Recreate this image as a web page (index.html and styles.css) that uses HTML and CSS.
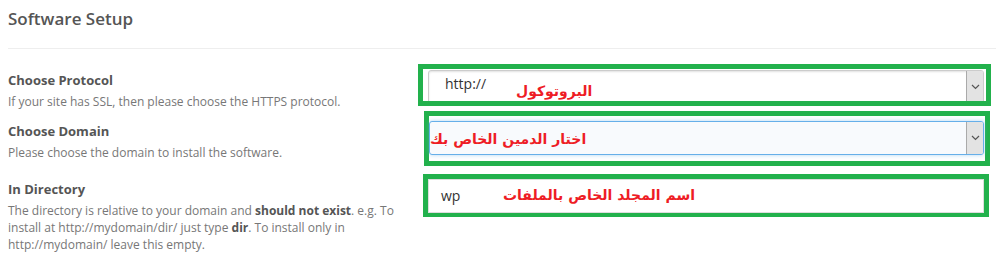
FILE: index.html
```html
<!DOCTYPE html>
<html>
<head>
	<title>Software Setup</title>
	<link rel="stylesheet" href="styles.css">
</head>

<body>
	<div class="panel">
		<h2 class="panel-title">Software Setup</h2>

		<div class="fields">
			<div class="label-block label-protocol">
				<div class="label">Choose Protocol</div>
				<div class="help">If your site has SSL, then please choose the HTTPS protocol.</div>
			</div>
			<div class="mark mark-protocol">
				<div class="select">
					<span class="select-value">http://</span>
					<span class="select-arrow"><svg width="9" height="6" viewBox="0 0 9 6"><path d="M1 1l3.5 3.5L8 1" fill="none" stroke="#555" stroke-width="1.2"/></svg></span>
				</div>
				<span class="note note-protocol">البروتوكول</span>
			</div>

			<div class="label-block label-domain">
				<div class="label">Choose Domain</div>
				<div class="help">Please choose the domain to install the software.</div>
			</div>
			<div class="mark mark-domain">
				<div class="select select-focus">
					<span class="select-value"></span>
					<span class="select-arrow"><svg width="9" height="6" viewBox="0 0 9 6"><path d="M1 1l3.5 3.5L8 1" fill="none" stroke="#555" stroke-width="1.2"/></svg></span>
				</div>
				<span class="note note-domain">اختار الدمين الخاص بك</span>
			</div>

			<div class="label-block label-dir">
				<div class="label">In Directory</div>
				<div class="help">The directory is relative to your domain and <b>should not exist</b>. e.g. To install at http://mydomain/dir/ just type <b>dir</b>. To install only in http://mydomain/ leave this empty.</div>
			</div>
			<div class="mark mark-dir">
				<div class="text-input">wp</div>
				<span class="note note-dir">اسم المجلد الخاص بالملفات</span>
			</div>
		</div>
	</div>
</body>
</html>
```

FILE: styles.css
```css
body {
	margin: 0;
	background: #fff;
	font-family: "Open Sans", "Liberation Sans", sans-serif;
	color: #555;
}

.panel {
	padding-left: 8px;
}

.panel-title {
	margin: 0;
	padding-top: 7px;
	height: 41px;
	font-size: 17px;
	font-weight: 600;
	color: #555;
	border-bottom: 1px solid #eee;
	box-sizing: content-box;
}

.fields {
	display: grid;
	grid-template-columns: 402px 1fr;
	grid-template-rows: 47px 63px auto;
	margin-top: 15px;
}

.label {
	font-size: 13px;
	font-weight: 700;
	line-height: 17px;
	color: #555;
}

.help {
	margin-top: 4px;
	font-size: 12px;
	line-height: 17px;
	color: #777;
	width: 400px;
}

.help b {
	color: #555;
}

.label-protocol {
	padding-top: 8px;
}

.label-domain {
	padding-top: 12px;
}

.label-dir {
	padding-top: 7px;
}

/* green annotation boxes */
.mark {
	position: relative;
	border: 5px solid #22b14c;
	box-sizing: border-box;
	align-self: start;
}

.mark-protocol {
	margin-left: 8px;
	width: 573px;
	height: 42px;
	padding: 1px 2px 0 5px;
	overflow: hidden;
}

.mark-domain {
	margin-left: 14px;
	width: 566px;
	height: 55px;
	padding: 5px 1px 0 0;
}

.mark-dir {
	margin-left: 13px;
	width: 566px;
	height: 43px;
	padding: 0 0 0 0;
}

.select {
	display: flex;
	align-items: stretch;
	height: 34px;
	border: 1px solid #ccc;
	border-radius: 3px;
	background: #fff;
	box-shadow: inset 0 1px 2px rgba(0, 0, 0, 0.12);
	box-sizing: border-box;
}

.select-focus {
	border-color: #66afe9;
	background: #f8fafd;
	box-shadow: 0 0 4px rgba(102, 175, 233, 0.5);
}

.select-value {
	flex: 1;
	padding-left: 16px;
	font-size: 14px;
	line-height: 26px;
	color: #333;
}

.select-arrow {
	width: 16px;
	display: flex;
	align-items: center;
	justify-content: center;
	background: #e3e3e3;
	border-left: 1px solid #aaa;
	border-radius: 0 2px 2px 0;
}

.text-input {
	height: 34px;
	border: 1px solid #ddd;
	padding-left: 12px;
	font-size: 14px;
	line-height: 32px;
	color: #333;
	box-sizing: border-box;
}

.note {
	position: absolute;
	direction: rtl;
	font-family: "DejaVu Sans", sans-serif;
	font-weight: 700;
	font-size: 14px;
	color: #ee1c25;
	white-space: nowrap;
}

.note-protocol {
	left: 93px;
	top: 14px;
}

.note-domain {
	left: 1px;
	top: 15px;
}

.note-dir {
	left: 75px;
	top: 8px;
}
```
